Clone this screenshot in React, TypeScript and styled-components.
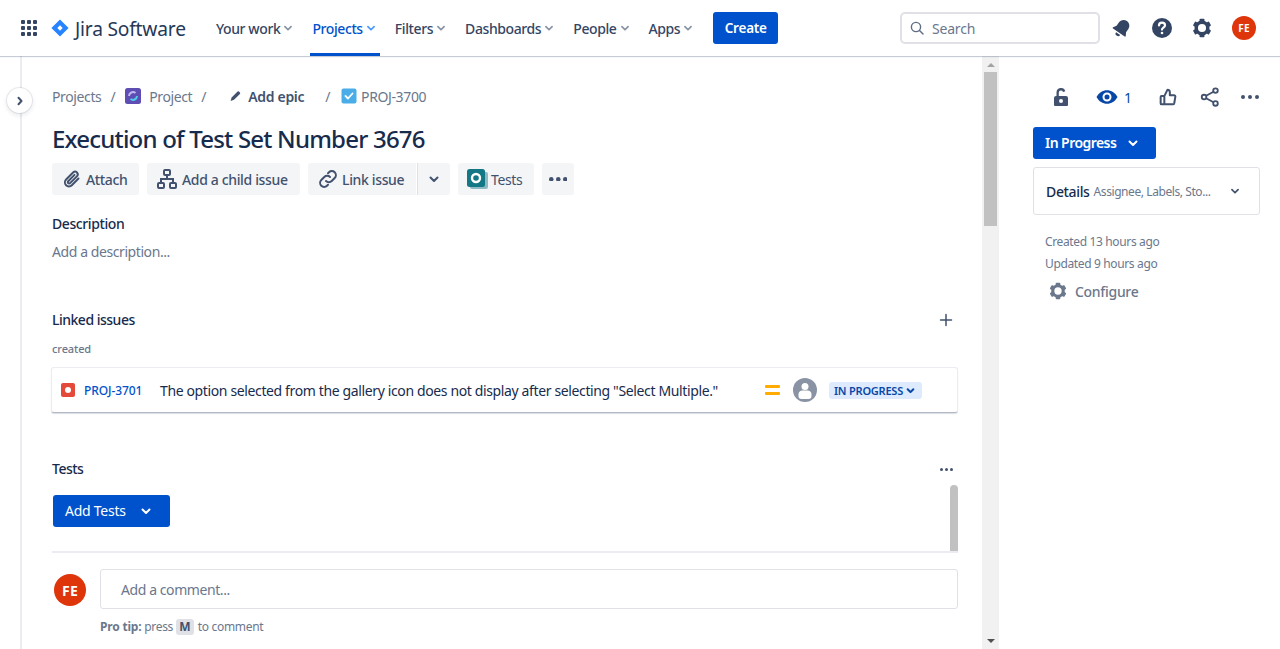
import React from "react";
import styled, { createGlobalStyle } from "styled-components";

const Global = createGlobalStyle`
  html, body { margin: 0; padding: 0; height: 100%; overflow: hidden; background: #fff; }
  body { font-family: "Noto Sans", "Open Sans", "Liberation Sans", sans-serif; color: #172B4D; font-size: 14px; }
  #root { height: 100%; }
  * { box-sizing: border-box; }
`;

const Page = styled.div`display: flex; flex-direction: column; height: 649px; width: 1280px;`;
const Header = styled.header`
  height: 56px; flex: none; display: flex; align-items: center; padding-left: 20px; background: #fff;
  box-shadow: 0 1px 1px rgba(9,30,66,.2), 0 0 1px rgba(9,30,66,.2); position: relative; z-index: 2;
`;
const Grid = styled.div`display: grid; grid-template-columns: repeat(3, 4px); gap: 2px; width: 20px; padding: 2px 1px;`;
const Dot = styled.span`width: 4px; height: 4px; border-radius: 1px; background: #344563;`;
const Brand = styled.div`display: flex; align-items: center; margin-left: 11px; width: 154px; gap: 6px; color: #253858; font-size: 19.200px; letter-spacing: -.2px;`;
const Nav = styled.nav`display: flex; height: 56px; gap: 13px; margin-left: 9px;`;
const NavItem = styled.div<{ $active?: boolean }>`
  position: relative; display: flex; align-items: center; gap: 1px; padding: 0 2px; font-size: 14px; font-weight: 500;
  letter-spacing: -.4px;
  color: ${p => (p.$active ? "#0052CC" : "#344563")};
  ${p => p.$active && `&::after{content:"";position:absolute;left:0;right:0;bottom:0;height:3px;background:#0052CC;}`}
`;
const CreateBtn = styled.button`
  margin-left: 16px; width: 65px; height: 32px; border: 0; border-radius: 3px; background: #0052CC; color: #fff;
  font: 600 13.500px "Noto Sans", sans-serif; letter-spacing: -.2px; padding: 0;
`;
const Search = styled.div`
  margin-left: auto; width: 200px; height: 32px; border: 2px solid #DFE1E6; border-radius: 5px; display: flex; align-items: center;
  padding-left: 8px; gap: 8px; color: #6B778C; font-size: 14px; letter-spacing: -.2px;
`;
const HeaderIcons = styled.div`display: flex; align-items: center; gap: 16px; margin-left: 10px; padding-right: 24px;`;
const HeaderIcon = styled.div`width: 24px; height: 24px; display: flex; align-items: center; justify-content: center; color: #344563;`;
const Avatar = styled.div<{ $size: number; $font: number; $ml?: number }>`
  width: ${p => p.$size}px; height: ${p => p.$size}px; border-radius: 50%; background: #DE350B; color: #fff; flex: none;
  margin-left: ${p => p.$ml ?? 0}px;
  display: flex; align-items: center; justify-content: center; font-size: ${p => p.$font}px; font-weight: 700;letter-spacing:.3px;
`;

const Body = styled.div`flex: 1; display: flex; min-height: 0;`;
const Rail = styled.div`position: relative; width: 22px; flex: none; border-right: 2px solid #EBECF0;`;
const Toggle = styled.div`
  position: absolute; left: 7px; top: 32px; width: 25px; height: 25px; border-radius: 50%; background: #fff;
  display: flex; align-items: center; justify-content: center; color: #42526E; z-index: 1;
  box-shadow: 0 0 0 1px rgba(9,30,66,.08), 0 2px 4px 1px rgba(9,30,66,.08);
`;
const Main = styled.main`position: relative; width: 960px; flex: none; padding: 30px 24px 0 30px; overflow: hidden;`;
const Crumbs = styled.div`display: flex; align-items: center; height: 20px; font-size: 14px; color: #6B778C; letter-spacing: -.38px;`;
const Sep = styled.span<{ $m: number; $r: number }>`margin: 0 ${p => p.$r}px 0 ${p => p.$m}px; color: #6B778C;`;
const CrumbText = styled.span<{ $ml: number }>`margin-left: ${p => p.$ml}px;`;
const EpicLabel = styled.span`font-weight: 600; color: #42526E; margin-left: 6px; letter-spacing: -.3px;`;
const Title = styled.h1`margin: 17px 0 0; font-size: 24px; font-weight: 500; line-height: 32px; color: #172B4D; letter-spacing: -.8px; white-space: nowrap;`;
const Toolbar = styled.div`display: flex; margin-top: 8px; height: 32px;`;
const ToolBtn = styled.div<{ $w: number; $mr?: number; $joined?: boolean; $gap?: number }>`
  width: ${p => p.$w}px; margin-right: ${p => p.$mr ?? 8}px; height: 32px; background: #F4F5F7; border-radius: ${p => (p.$joined ? "3px 0 0 3px" : "3px")};
  display: flex; align-items: center; gap: ${p => p.$gap ?? 2}px; padding-left: 8px; color: #42526E; font-size: 14px; font-weight: 500; letter-spacing: -.35px;
  white-space: nowrap;
`;
const ToolArrow = styled.div`width: 33px; height: 32px; margin-right: 8px; margin-left: 1px; background: #F4F5F7; border-left: 1px solid #DFE1E6; border-radius: 0 3px 3px 0; display:flex;align-items:center;justify-content:center;color:#42526E;`;
const ToolMore = styled.div`width: 32px; height: 32px; background: #F4F5F7; border-radius: 3px; display:flex;align-items:center;justify-content:center;color:#42526E;`;
const TestsLabel = styled.span`font-weight: 400;`;
const SectionTitle = styled.div<{ $mt: number }>`margin-top: ${p => p.$mt}px; font-size: 14px; font-weight: 500; color: #172B4D; height: 20px; line-height: 20px; letter-spacing: -.4px;`;
const Placeholder = styled.div`margin-top: 8px; height: 20px; line-height: 20px; color: #6B778C; letter-spacing: -.42px;`;
const SectionRow = styled.div<{ $mt: number }>`margin-top: ${p => p.$mt}px; display: flex; justify-content: space-between; align-items: center; height: 20px; font-size: 14px; font-weight: 500; letter-spacing: -.5px;`;
const RowLabel = styled.span`margin-top: -2px;`;
const PlusIcon = styled.svg`margin-right: 5px;`;
const RowDots = styled.span`display: flex; margin-right: 5px; color: #42526E;`;
const Small = styled.div`margin-top: 11px; font-size: 11px; font-weight: 500; color: #6B778C; height: 16px; line-height: 16px; letter-spacing: -.1px;`;
const Card = styled.div`
  margin-top: 10px; margin-left: -1px; height: 46px; border: 1px solid #EBECF0; border-bottom-color: #B3BAC5; border-radius: 3px; display: flex; align-items: center;
  padding-left: 9px; box-shadow: 0 1px 1px rgba(9,30,66,.15); background: #fff;
`;
const Bug = styled.span`width: 14px; height: 14px; border-radius: 2px; background: #E5493A; display:flex;align-items:center;justify-content:center; flex:none;
  &::after{content:"";width:6px;height:6px;border-radius:50%;background:#fff;}`;
const IssueKey = styled.span`margin-left: 9px; width: 76px; color: #0052CC; font-size: 12px; font-weight: 500; letter-spacing: -.1px;`;
const IssueText = styled.span`width: 605px; font-size: 14px; letter-spacing: -.37px; color: #172B4D; white-space: nowrap;`;
const Medium = styled.span`display:flex;flex-direction:column;gap:4px;width:15px;flex:none;
  &::before,&::after{content:"";height:3px;border-radius:1px;background:#FFAB00;}`;
const AssigneeSlot = styled.span`margin-left: 13px; display: flex;`;
const Lozenge = styled.div`
  margin-left: 12px; width: 93px; height: 17px; background: #DEEBFF; color: #0747A6; border-radius: 3px; font-size: 11px; font-weight: 600;
  display: flex; align-items: center; padding-left: 5px; gap: 1px; letter-spacing: -.22px; white-space: nowrap;
`;
const AddTests = styled.div`
  margin-top: 16px; width: 117px; height: 32px; padding-bottom: 1px; background: #0052CC; color: #fff; border-radius: 3px; display: flex; align-items: center;
  padding-left: 12px; gap: 12px; font-size: 14px; letter-spacing: -.25px; margin-left: 1px;
`;
const InnerThumb = styled.div`position: absolute; left: 928px; top: 429px; width: 8px; height: 66px; background: #C1C1C1; border-radius: 4px 4px 0 0;`;
const Divider = styled.div`margin-top: 24px; height: 2px; background: #EBECF0;`;
const CommentRow = styled.div`display: flex; margin-top: 16px; padding-left: 2px; gap: 14px;`;
const AvatarSlot = styled.div`padding-top: 5px;`;
const CommentInput = styled.div`flex: 1; height: 40px; border: 1px solid #DFE1E6; border-radius: 3px; padding-left: 20px; display:flex;align-items:center; color: #6B778C; letter-spacing: -.42px;`;
const ProTip = styled.div`margin: 9px 0 0 48px; display: flex; align-items: center; font-size: 12px; color: #6B778C; letter-spacing: -.3px; white-space: pre;`;
const Kbd = styled.span`width: 18px; height: 16px; border-radius: 3px; background: #DFE1E6; color: #42526E; font-weight: 700; display:flex;align-items:center;justify-content:center; margin: 0 1px 0 0;`;
const Strong = styled.b`font-weight: 700; letter-spacing: -.2px;`;

const Track = styled.div`width: 17px; flex: none; background: #F1F1F1; display: flex; flex-direction: column; align-items: center; padding-top: 5px;`;
const Thumb = styled.div`width: 13px; height: 154px; background: #C1C1C1; margin-top: 5px;`;
const ArrowUp = styled.span`width:0;height:0;border:4px solid transparent;border-top:0;border-bottom:4px solid #A3A3A3;margin-top:2px;`;
const ArrowDown = styled.span`width:0;height:0;border:4px solid transparent;border-bottom:0;border-top:4px solid #505050;margin-top:auto;margin-bottom:6px;`;

const Side = styled.aside`flex: 1; padding: 30px 20px 0 34px;`;
const SideActions = styled.div`height: 22px; display: flex; align-items: center; padding-left: 16px; color: #42526E;`;
const WatchCount = styled.span`color: #0747A6; font-size: 14px; margin-left: 5px; width: 33px;`;
const ActionIcon = styled.span<{ $w: number }>`width: ${p => p.$w}px; display: flex; color: #42526E;`;
const StatusBtn = styled.div`
  margin-top: 19px; width: 123px; height: 32px; padding-bottom: 1px; background: #0052CC; border-radius: 3px; color: #fff; font-weight: 600; font-size: 14px; letter-spacing: -.55px;
  display: flex; align-items: center; padding-left: 12px; gap: 9px; 
`;
const Details = styled.div`
  margin-top: 8px; height: 48px; border: 1px solid #DFE1E6; border-radius: 3px; display: flex; align-items: center; padding-left: 12px; padding-right: 17px;
`;
const DetailsLabel = styled.span`font-size: 14px; font-weight: 500; letter-spacing: -.35px; margin-right: 4px;`;
const DetailsHint = styled.span`font-size: 12px; color: #6B778C; letter-spacing: -.42px; flex: 1; white-space: nowrap;`;
const DetailsChevron = styled.span`display: flex; color: #42526E;`;
const Meta = styled.div<{ $mt: number }>`margin: ${p => p.$mt}px 0 0 12px; font-size: 12px; line-height: 16px; color: #6B778C; letter-spacing: -.36px;`;
const Configure = styled.div`margin: 9px 0 0 15px; display: flex; align-items: center; gap: 7px; color: #6B778C; font-weight: 500; font-size: 14px; letter-spacing: -.3px;`;

const Chevron = ({ size = 16, color = "currentColor", width = 2 }: { size?: number; color?: string; width?: number }) => (
  <svg width={size} height={size} viewBox="0 0 16 16" fill="none"><path d="M4.500 6.500 8 10l3.500-3.500" stroke={color} strokeWidth={width} strokeLinecap="round" strokeLinejoin="round" /></svg>
);
const Dots = ({ size = 4, gap = 3, color = "currentColor" }: { size?: number; gap?: number; color?: string }) => {
  const w = size * 3 + gap * 2;
  return (
    <svg width={w} height={size} viewBox={`0 0 ${w} ${size}`} fill={color}>
      {[0, 1, 2].map(i => <circle key={i} cx={size / 2 + i * (size + gap)} cy={size / 2} r={size / 2} />)}
    </svg>
  );
};
const Gear = ({ size = 24 }: { size?: number }) => (
  <svg width={size} height={size} viewBox="0 0 24 24" fill="none">
    <circle cx="12" cy="12" r="6.300" stroke="currentColor" strokeWidth="3.800" />
    {[0, 60, 120, 180, 240, 300].map(a => <rect key={a} x="9.300" y="2" width="5.400" height="4.500" rx="1" fill="currentColor" transform={`rotate(${a} 12 12)`} />)}
  </svg>
);

const navs: [string, boolean][] = [["Your work", false], ["Projects", true], ["Filters", false], ["Dashboards", false], ["People", false], ["Apps", false]];

export default function App() {
  return (
    <Page>
      <Global />
      <Header>
        <Grid>{Array.from({ length: 9 }).map((_, i) => <Dot key={i} />)}</Grid>
        <Brand>
          <svg width="18" height="18" viewBox="0 0 18 18"><path fillRule="evenodd" fill="#2684FF" d="M9 .4 17.600 9 9 17.600.4 9 9 .4Zm0 5.900L6.300 9 9 11.700 11.700 9 9 6.300Z" /></svg>
          <span>Jira Software</span>
        </Brand>
        <Nav>
          {navs.map(([n, a]) => (
            <NavItem key={n} $active={a}>
              {n}
              <Chevron size={14} color={a ? "#4C9AFF" : "#8993A4"} />
            </NavItem>
          ))}
        </Nav>
        <CreateBtn>Create</CreateBtn>
        <Search>
          <svg width="14" height="14" viewBox="0 0 14 14" fill="none" stroke="#5E6C84" strokeWidth="1.400"><circle cx="6" cy="6" r="4.600" /><path d="m9.500 9.500 3.500 3.500" strokeLinecap="round" /></svg>
          <span>Search</span>
        </Search>
        <HeaderIcons>
          <HeaderIcon>
            <svg width="24" height="24" viewBox="0 0 24 24" fill="currentColor"><g transform="rotate(35 12 12)"><path d="M12 3.500c-3.400 0-5.800 2.600-5.800 6v3.700L4.300 16.500c-.3.600.1 1 .6 1h14.200c.5 0 .9-.4.6-1l-1.900-3.300V9.500c0-3.400-2.400-6-5.800-6Z" /><path d="M9.500 18.800h5a2.500 2.500 0 0 1-5 0Z" /></g></svg>
          </HeaderIcon>
          <HeaderIcon>
            <svg width="22" height="22" viewBox="0 0 22 22"><circle cx="11" cy="11" r="10" fill="currentColor" /><path d="M8 8.500c0-1.700 1.300-2.800 3-2.800s3 1.100 3 2.600c0 2.300-3 2.300-3 4.300" fill="none" stroke="#fff" strokeWidth="2.200" strokeLinecap="round" /><circle cx="11" cy="16" r="1.300" fill="#fff" /></svg>
          </HeaderIcon>
          <HeaderIcon><Gear size={22} /></HeaderIcon>
          <Avatar $size={24} $font={10} $ml={2}>FE</Avatar>
        </HeaderIcons>
      </Header>
      <Body>
        <Rail>
          <Toggle><svg width="12" height="12" viewBox="0 0 12 12" fill="none"><path d="m4.500 2.800 3 3.200-3 3.200" stroke="currentColor" strokeWidth="2" strokeLinecap="round" strokeLinejoin="round" /></svg></Toggle>
        </Rail>
        <Main>
          <Crumbs>
            <span>Projects</span>
            <Sep $m={9} $r={10}>/</Sep>
            <svg width="16" height="16" viewBox="0 0 16 16"><rect width="16" height="16" rx="2.500" fill="#5E4DB2" /><path d="M4 8a4 4 0 0 1 6.500-3" fill="none" stroke="#C0B6F2" strokeWidth="2" /><path d="M12 8a4 4 0 0 1-6.500 3" fill="none" stroke="#4BCCE8" strokeWidth="2" /></svg>
            <CrumbText $ml={8}>Project</CrumbText>
            <Sep $m={9} $r={22}>/</Sep>
            <svg width="14" height="14" viewBox="0 0 14 14" fill="#42526E"><path d="M9.600 2.600a1 1 0 0 1 1.400 0l.9.9a1 1 0 0 1 0 1.400L6 10.800l-3.400 1.100 1-3.400 6-5.900Z" /></svg>
            <EpicLabel>Add epic</EpicLabel>
            <Sep $m={21} $r={11}>/</Sep>
            <svg width="16" height="16" viewBox="0 0 16 16"><rect x=".5" y=".5" width="15" height="15" rx="2" fill="#4BADE8" /><path d="m4.500 8 2.500 2.500 4.500-5" fill="none" stroke="#fff" strokeWidth="1.800" strokeLinecap="round" strokeLinejoin="round" /></svg>
            <CrumbText $ml={4}>PROJ-3700</CrumbText>
          </Crumbs>
          <Title>Execution of Test Set Number 3676</Title>
          <Toolbar>
            <ToolBtn $w={87}>
              <svg width="24" height="24" viewBox="0 0 24 24" fill="none" stroke="currentColor" strokeWidth="2" strokeLinecap="round"><path d="m18.500 11.500-6.700 6.700a4 4 0 0 1-5.700-5.700l7.200-7.200a2.700 2.700 0 0 1 3.800 3.800l-7 7a1.300 1.300 0 0 1-1.900-1.900l6.300-6.300" /></svg>
              Attach
            </ToolBtn>
            <ToolBtn $w={153} $gap={3}>
              <svg width="24" height="24" viewBox="0 0 24 24" fill="none" stroke="currentColor" strokeWidth="2"><rect x="9" y="3" width="6" height="5" rx="1" /><rect x="3" y="16" width="6" height="5" rx="1" /><rect x="15" y="16" width="6" height="5" rx="1" /><path d="M12 8v4M6 16v-4h12v4" /></svg>
              Add a child issue
            </ToolBtn>
            <ToolBtn $w={108} $mr={0} $joined>
              <svg width="24" height="24" viewBox="0 0 24 24" fill="none" stroke="currentColor" strokeWidth="2" strokeLinecap="round"><path d="M10 14a4 4 0 0 0 5.700 0l3-3a4 4 0 0 0-5.700-5.700l-1 1" /><path d="M14 10a4 4 0 0 0-5.700 0l-3 3a4 4 0 0 0 5.700 5.700l1-1" /></svg>
              Link issue
            </ToolBtn>
            <ToolArrow><Chevron size={16} /></ToolArrow>
            <ToolBtn $w={76} $mr={8} $gap={3}>
              <svg width="22" height="22" viewBox="0 0 22 22"><rect x="4" y="4" width="18" height="17" rx="2" fill="#8FBAC4" /><rect x="1" y="1" width="18" height="18" rx="2.500" fill="#147785" /><circle cx="10" cy="10" r="4" fill="none" stroke="#fff" strokeWidth="2.400" /></svg>
              <TestsLabel>Tests</TestsLabel>
            </ToolBtn>
            <ToolMore><Dots size={4.500} gap={2.500} /></ToolMore>
          </Toolbar>
          <SectionTitle $mt={19}>Description</SectionTitle>
          <Placeholder>Add a description...</Placeholder>
          <SectionRow $mt={48}>
            <RowLabel>Linked issues</RowLabel>
            <PlusIcon width="14" height="14" viewBox="0 0 14 14" stroke="#42526E" strokeWidth="1.500" strokeLinecap="round"><path d="M7 1.500v11M1.500 7h11" /></PlusIcon>
          </SectionRow>
          <Small>created</Small>
          <Card>
            <Bug />
            <IssueKey>PROJ-3701</IssueKey>
            <IssueText>The option selected from the gallery icon does not display after selecting "Select Multiple."</IssueText>
            <Medium />
            <AssigneeSlot>
              <svg width="24" height="24" viewBox="0 0 24 24"><circle cx="12" cy="12" r="12" fill="#8993A4" /><circle cx="12" cy="8.500" r="3.500" fill="#fff" /><path d="M5.500 16a4 4 0 0 1 4-3.500h5a4 4 0 0 1 4 3.500v2a3 3 0 0 1-3 3h-7a3 3 0 0 1-3-3v-2Z" fill="#fff" /></svg>
            </AssigneeSlot>
            <Lozenge>IN PROGRESS<Chevron size={13} width={2.500} /></Lozenge>
          </Card>
          <SectionRow $mt={46}>
            <RowLabel>Tests</RowLabel>
            <RowDots><Dots size={3} gap={2} /></RowDots>
          </SectionRow>
          <AddTests>Add Tests<Chevron size={16} /></AddTests>
          <InnerThumb />
          <Divider />
          <CommentRow>
            <AvatarSlot><Avatar $size={32} $font={14}>FE</Avatar></AvatarSlot>
            <CommentInput>Add a comment...</CommentInput>
          </CommentRow>
          <ProTip><Strong>Pro tip:</Strong> press <Kbd>M</Kbd> to comment</ProTip>
        </Main>
        <Track><ArrowUp /><Thumb /><ArrowDown /></Track>
        <Side>
          <SideActions>
            <ActionIcon $w={46}>
              <svg width="24" height="24" viewBox="0 0 24 24" fill="currentColor"><path fillRule="evenodd" d="M7.500 11V7.500a4.500 4.500 0 0 1 8.800-1.300l-2.300.7A2.200 2.200 0 0 0 9.800 7.500V11H17a2 2 0 0 1 2 2v7a1 1 0 0 1-1 1H6a1 1 0 0 1-1-1v-7a2 2 0 0 1 2-2Zm4.500 3a2 2 0 1 0 0 4 2 2 0 0 0 0-4Z" /></svg>
            </ActionIcon>
            <svg width="24" height="24" viewBox="0 0 24 24"><path d="M1.500 12C4 7.500 7.700 5.200 12 5.200S20 7.500 22.500 12c-2.500 4.500-6.200 6.800-10.500 6.800S4 16.500 1.500 12Z" fill="#0747A6" /><circle cx="12" cy="12" r="3.500" fill="none" stroke="#fff" strokeWidth="2" /></svg>
            <WatchCount>1</WatchCount>
            <ActionIcon $w={42}>
              <svg width="22" height="22" viewBox="0 0 24 24" fill="none" stroke="currentColor" strokeWidth="2.200" strokeLinejoin="round"><path d="M8 11v9H5a1 1 0 0 1-1-1v-7a1 1 0 0 1 1-1h3Zm0 0 3.500-7c1.500 0 2.500 1.200 2.500 2.800V10h4.500A1.500 1.500 0 0 1 20 11.800l-1.200 7A1.500 1.500 0 0 1 17.300 20H8" /></svg>
            </ActionIcon>
            <ActionIcon $w={42}>
              <svg width="22" height="22" viewBox="0 0 24 24" fill="none" stroke="currentColor" strokeWidth="2"><circle cx="18" cy="5" r="2.500" /><circle cx="5.500" cy="12" r="2.500" /><circle cx="18" cy="19" r="2.500" /><path d="m7.800 10.700 8-4.500M7.800 13.300l8 4.500" /></svg>
            </ActionIcon>
            <Dots size={4} gap={3} />
          </SideActions>
          <StatusBtn>In Progress<Chevron size={16} /></StatusBtn>
          <Details>
            <DetailsLabel>Details</DetailsLabel>
            <DetailsHint>Assignee, Labels, Sto...</DetailsHint>
            <DetailsChevron><Chevron size={14} /></DetailsChevron>
          </Details>
          <Meta $mt={19}>Created 13 hours ago</Meta>
          <Meta $mt={6}>Updated 9 hours ago</Meta>
          <Configure><Gear size={20} />Configure</Configure>
        </Side>
      </Body>
    </Page>
  );
}
